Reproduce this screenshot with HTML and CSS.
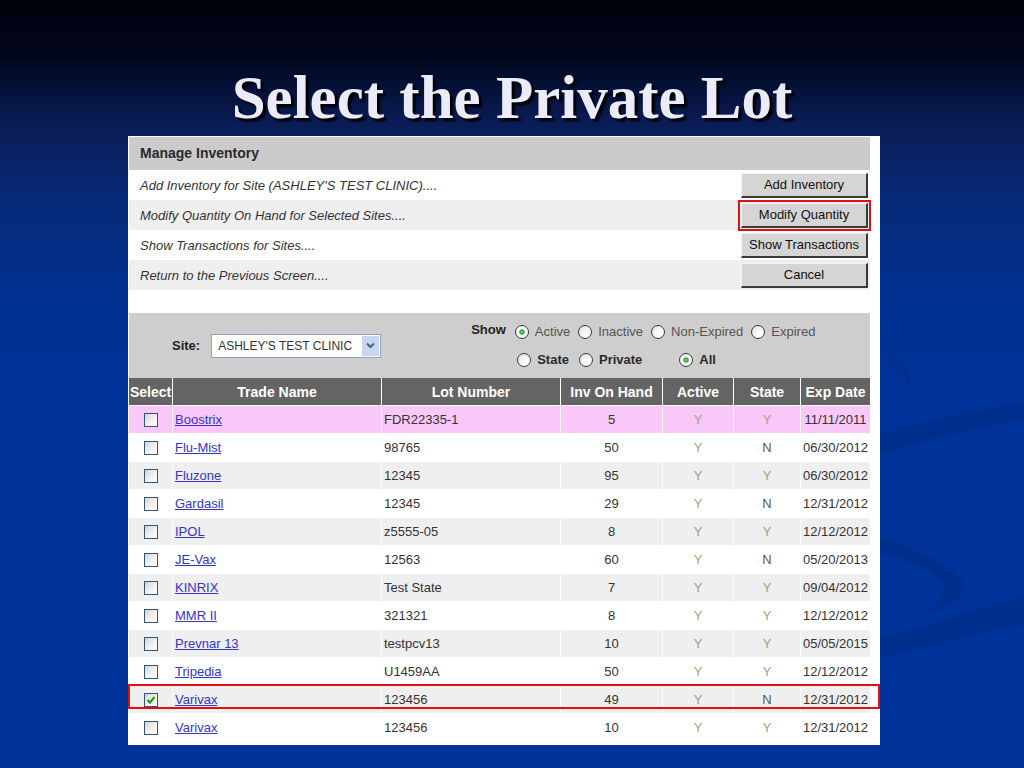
FILE: index.html
```html
<!DOCTYPE html>
<html lang="en">
<head>
  <meta charset="UTF-8">
  <title>Select the Private Lot</title>
  <link rel="stylesheet" href="styles.css">
</head>
<body>
  <svg class="fundo" width="1024" height="768" viewBox="0 0 1024 768">
    <path d="M880 434 Q950 414 1024 402 L1024 420 Q950 432 880 454 Z" fill="#00246f" opacity="0.3"/>
    <path d="M878 536 Q950 560 966 586 Q962 604 924 614 Q948 598 942 584 Q926 564 878 552 Z" fill="#00246f" opacity="0.3"/>
    <path d="M880 638 Q950 618 1024 596 L1024 624 Q950 640 880 658 Z" fill="#00246f" opacity="0.3"/>
    <path d="M890 352 Q912 368 912 390 Q904 376 888 366 Z" fill="#00246f" opacity="0.2"/>
  </svg>

  <div class="slide">
    <h1 class="titulo">Select the Private Lot</h1>

    <div class="painel">
      <div class="blocoTopo">
        <div class="cabecalho">Manage Inventory</div>
        <div class="linhaAcao">
          <span>Add Inventory for Site (ASHLEY'S TEST CLINIC)....</span>
          <button class="botao">Add Inventory</button>
        </div>
        <div class="linhaAcao cinza">
          <span>Modify Quantity On Hand for Selected Sites....</span>
          <button class="botao marcado">Modify Quantity</button>
        </div>
        <div class="linhaAcao">
          <span>Show Transactions for Sites....</span>
          <button class="botao">Show Transactions</button>
        </div>
        <div class="linhaAcao cinza">
          <span>Return to the Previous Screen....</span>
          <button class="botao">Cancel</button>
        </div>
      </div>

      <div class="filtro">
        <div class="filtroSite">
          <b>Site:</b>
          <div class="combo">
            <span>ASHLEY'S TEST CLINIC</span>
            <span class="seta">
              <svg width="9" height="7" viewBox="0 0 9 7"><path d="M1 1.5 L4.5 5 L8 1.5" fill="none" stroke="#4d6185" stroke-width="2"/></svg>
            </span>
          </div>
        </div>
        <div class="filtroShow">
          <div class="linhaRadio">
            <b class="rotuloShow">Show</b>
            <span class="radio on"></span><span class="opcao">Active</span>
            <span class="radio"></span><span class="opcao">Inactive</span>
            <span class="radio"></span><span class="opcao">Non-Expired</span>
            <span class="radio"></span><span class="opcao">Expired</span>
          </div>
          <div class="linhaRadio segunda">
            <span class="radio"></span><b class="opcao">State</b>
            <span class="radio"></span><b class="opcao">Private</b>
            <span class="radio on longe"></span><b class="opcao">All</b>
          </div>
        </div>
      </div>

      <table class="tabela">
        <thead>
          <tr>
            <th class="colSel">Select</th>
            <th class="colNome">Trade Name</th>
            <th class="colLote">Lot Number</th>
            <th class="colInv">Inv On Hand</th>
            <th class="colAtivo">Active</th>
            <th class="colEstado">State</th>
            <th class="colData">Exp Date</th>
          </tr>
        </thead>
        <tbody>
          <tr class="rosa">
            <td class="centro"><span class="caixa"></span></td>
            <td><a href="#">Boostrix</a></td>
            <td>FDR22335-1</td>
            <td class="centro">5</td>
            <td class="centro sim">Y</td>
            <td class="centro sim">Y</td>
            <td class="centro">11/11/2011</td>
          </tr>
          <tr>
            <td class="centro"><span class="caixa"></span></td>
            <td><a href="#">Flu-Mist</a></td>
            <td>98765</td>
            <td class="centro">50</td>
            <td class="centro sim">Y</td>
            <td class="centro nao">N</td>
            <td class="centro">06/30/2012</td>
          </tr>
          <tr class="cinza">
            <td class="centro"><span class="caixa"></span></td>
            <td><a href="#">Fluzone</a></td>
            <td>12345</td>
            <td class="centro">95</td>
            <td class="centro sim">Y</td>
            <td class="centro sim">Y</td>
            <td class="centro">06/30/2012</td>
          </tr>
          <tr>
            <td class="centro"><span class="caixa"></span></td>
            <td><a href="#">Gardasil</a></td>
            <td>12345</td>
            <td class="centro">29</td>
            <td class="centro sim">Y</td>
            <td class="centro nao">N</td>
            <td class="centro">12/31/2012</td>
          </tr>
          <tr class="cinza">
            <td class="centro"><span class="caixa"></span></td>
            <td><a href="#">IPOL</a></td>
            <td>z5555-05</td>
            <td class="centro">8</td>
            <td class="centro sim">Y</td>
            <td class="centro sim">Y</td>
            <td class="centro">12/12/2012</td>
          </tr>
          <tr>
            <td class="centro"><span class="caixa"></span></td>
            <td><a href="#">JE-Vax</a></td>
            <td>12563</td>
            <td class="centro">60</td>
            <td class="centro sim">Y</td>
            <td class="centro nao">N</td>
            <td class="centro">05/20/2013</td>
          </tr>
          <tr class="cinza">
            <td class="centro"><span class="caixa"></span></td>
            <td><a href="#">KINRIX</a></td>
            <td>Test State</td>
            <td class="centro">7</td>
            <td class="centro sim">Y</td>
            <td class="centro sim">Y</td>
            <td class="centro">09/04/2012</td>
          </tr>
          <tr>
            <td class="centro"><span class="caixa"></span></td>
            <td><a href="#">MMR II</a></td>
            <td>321321</td>
            <td class="centro">8</td>
            <td class="centro sim">Y</td>
            <td class="centro sim">Y</td>
            <td class="centro">12/12/2012</td>
          </tr>
          <tr class="cinza">
            <td class="centro"><span class="caixa"></span></td>
            <td><a href="#">Prevnar 13</a></td>
            <td>testpcv13</td>
            <td class="centro">10</td>
            <td class="centro sim">Y</td>
            <td class="centro sim">Y</td>
            <td class="centro">05/05/2015</td>
          </tr>
          <tr>
            <td class="centro"><span class="caixa"></span></td>
            <td><a href="#">Tripedia</a></td>
            <td>U1459AA</td>
            <td class="centro">50</td>
            <td class="centro sim">Y</td>
            <td class="centro sim">Y</td>
            <td class="centro">12/12/2012</td>
          </tr>
          <tr class="cinza">
            <td class="centro">
              <span class="caixa">
                <svg width="12" height="12" viewBox="0 0 12 12"><path d="M2.5 6 L5 8.5 L9.5 3" fill="none" stroke="#21a121" stroke-width="2.2"/></svg>
              </span>
            </td>
            <td><a href="#">Varivax</a></td>
            <td>123456</td>
            <td class="centro">49</td>
            <td class="centro sim">Y</td>
            <td class="centro nao">N</td>
            <td class="centro">12/31/2012</td>
          </tr>
          <tr>
            <td class="centro"><span class="caixa"></span></td>
            <td><a href="#">Varivax</a></td>
            <td>123456</td>
            <td class="centro">10</td>
            <td class="centro sim">Y</td>
            <td class="centro sim">Y</td>
            <td class="centro">12/31/2012</td>
          </tr>
        </tbody>
      </table>

      <!-- destaque vermelho da linha escolhida -->
      <div class="marcaLinha"></div>
    </div>
  </div>
</body>
</html>
```

FILE: styles.css
```css
body {
  margin: 0;
  padding: 0;
  width: 1024px;
  height: 768px;
  overflow: hidden;
  position: relative;
  background: linear-gradient(to bottom, #00000a 0%, #000820 8%, #0a1c55 16%, #072a78 26%, #003090 38%, #003399 50%, #003399 100%);
  font-family: "Liberation Sans", Arial, Helvetica, sans-serif;
}

.fundo {
  position: absolute;
  top: 0;
  left: 0;
}

.slide {
  position: relative;
  width: 1024px;
}

.titulo {
  margin: 0;
  height: 136px;
  box-sizing: border-box;
  padding-top: 67px;
  text-align: center;
  font-family: "Liberation Serif", "Times New Roman", serif;
  font-size: 61px;
  line-height: 61px;
  font-weight: bold;
  color: #ebebf9;
  text-shadow: 3px 3px 2px #000000;
}

.painel {
  position: relative;
  margin-left: 128px;
  width: 752px;
  height: 609px;
  background-color: #ffffff;
  color: #333333;
}

/* bloco Manage Inventory */
.blocoTopo {
  margin: 0 10px 0 1px;
  padding-top: 1px;
}

.cabecalho {
  height: 33px;
  line-height: 33px;
  padding-left: 11px;
  background-color: #cbcbcb;
  font-size: 14px;
  font-weight: bold;
  color: #2a2a2a;
}

.linhaAcao {
  height: 30px;
  display: flex;
  align-items: center;
  justify-content: space-between;
  padding-left: 11px;
  font-size: 13px;
  font-style: italic;
  color: #333333;
}

.cinza {
  background-color: #efefef;
}

.botao {
  width: 127px;
  height: 25px;
  margin-right: 2px;
  padding: 0;
  font-family: "Liberation Sans", Arial, sans-serif;
  font-size: 13px;
  color: #111111;
  background-color: #d5d5d5;
  border-style: solid;
  border-width: 1px 2px 2px 1px;
  border-top-color: #f4f4f4;
  border-left-color: #f4f4f4;
  border-right-color: #3a3a3a;
  border-bottom-color: #3a3a3a;
}

.marcado {
  outline: 2px solid #e01010;
  outline-offset: 1px;
}

/* filtro Site / Show */
.filtro {
  margin: 23px 10px 0 1px;
  height: 65px;
  background-color: #cecece;
  display: flex;
  align-items: center;
  font-size: 13px;
}

.filtroSite {
  display: flex;
  align-items: center;
  padding-left: 43px;
}

.filtroSite b {
  color: #222222;
  margin-right: 11px;
}

.combo {
  width: 170px;
  height: 24px;
  box-sizing: border-box;
  border: 1px solid #8ea3c2;
  background-color: #ffffff;
  display: flex;
  align-items: center;
  justify-content: space-between;
  padding-left: 6px;
  font-size: 12px;
  color: #333333;
}

.seta {
  width: 17px;
  height: 20px;
  margin-right: 1px;
  background-color: #c9d6f2;
  display: flex;
  align-items: center;
  justify-content: center;
}

.filtroShow {
  margin-left: 90px;
  display: flex;
  flex-direction: column;
}

.linhaRadio {
  height: 28px;
  display: flex;
  align-items: center;
  color: #555555;
}

.linhaRadio.segunda {
  padding-left: 46px;
  color: #2a2a2a;
}

.rotuloShow {
  color: #222222;
  margin-right: 9px;
  margin-top: -4px;
}

.radio {
  display: inline-block;
  width: 14px;
  height: 14px;
  box-sizing: border-box;
  border: 1px solid #3c3c3c;
  border-radius: 50%;
  background: radial-gradient(circle at 65% 65%, #ffffff 0%, #f2f2f2 50%, #d8d8d8 100%);
  margin-right: 6px;
}

.radio.on {
  background: radial-gradient(circle, #7fe07f 0%, #23a323 28%, #ffffff 36%, #f0f0f0 70%, #d8d8d8 100%);
}

.radio.longe {
  margin-left: 27px;
}

.opcao {
  margin-right: 8px;
}

.linhaRadio.segunda .opcao {
  margin-right: 10px;
}

/* tabela de lotes */
.tabela {
  border-collapse: separate;
  border-spacing: 1px;
  width: 743px;
  margin-top: -1px;
  font-size: 13px;
  table-layout: fixed;
}

.tabela th {
  height: 27px;
  padding: 0;
  background-color: #646464;
  color: #ffffff;
  font-size: 14px;
  font-weight: bold;
  text-align: center;
  white-space: nowrap;
}

.colSel { width: 43px; }
.colNome { width: 208px; }
.colLote { width: 178px; }
.colInv { width: 101px; }
.colAtivo { width: 70px; }
.colEstado { width: 66px; }
.colData { width: 69px; }

.tabela td {
  height: 27px;
  padding: 0 0 0 2px;
  color: #333333;
  white-space: nowrap;
}

.tabela td.centro {
  text-align: center;
  padding: 0;
}

.tabela a {
  color: #3434c8;
  text-decoration: underline;
}

.rosa td {
  background-color: #f9c8f9;
}

.tabela .cinza td {
  background-color: #efefef;
}

.tabela td.sim {
  color: #a3a085;
}

.tabela td.nao {
  color: #555555;
}

.caixa {
  display: inline-block;
  width: 14px;
  height: 14px;
  box-sizing: border-box;
  border: 1px solid #33557a;
  background: linear-gradient(135deg, #d6d6d0 0%, #f3f3f1 60%, #ffffff 100%);
  vertical-align: middle;
  position: relative;
}

.caixa svg {
  display: block;
  margin: 0;
}

.marcaLinha {
  position: absolute;
  left: 0;
  top: 548px;
  width: 752px;
  height: 25px;
  box-sizing: border-box;
  border: 2px solid #e01010;
}
```
